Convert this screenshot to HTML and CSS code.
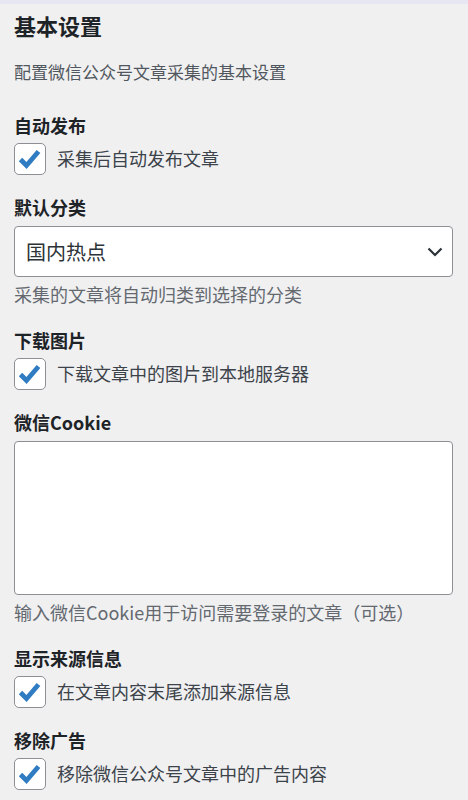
FILE: index.html
```html
<!DOCTYPE html>
<html lang="zh-CN">
<head>
<meta charset="utf-8">
<title>基本设置</title>
<link rel="stylesheet" href="styles.css">
</head>
<body>
<div class="topbar"></div>
<main class="wrap">
  <h1 class="title">基本设置</h1>
  <p class="desc">配置微信公众号文章采集的基本设置</p>

  <div class="fields">
    <div class="field">
      <div class="label">自动发布</div>
      <label class="check">
        <span class="box"><svg viewBox="0 0 32 32" width="32" height="32"><polyline points="6.5,16.5 12.5,22.5 24.5,8.5" fill="none" stroke="#2f7cc2" stroke-width="4.8" stroke-linejoin="miter"/></svg></span>
        <span class="check-text">采集后自动发布文章</span>
      </label>
    </div>

    <div class="field">
      <div class="label">默认分类</div>
      <div class="select">
        <span class="select-text">国内热点</span>
        <svg class="chev" viewBox="0 0 16 10" width="16" height="10"><polyline points="1.5,1.5 8,8 14.5,1.5" fill="none" stroke="#2c3338" stroke-width="2.2"/></svg>
      </div>
      <p class="help help-gap">采集的文章将自动归类到选择的分类</p>
    </div>

    <div class="field">
      <div class="label">下载图片</div>
      <label class="check">
        <span class="box"><svg viewBox="0 0 32 32" width="32" height="32"><polyline points="6.5,16.5 12.5,22.5 24.5,8.5" fill="none" stroke="#2f7cc2" stroke-width="4.8" stroke-linejoin="miter"/></svg></span>
        <span class="check-text">下载文章中的图片到本地服务器</span>
      </label>
    </div>

    <div class="field">
      <div class="label">微信Cookie</div>
      <div class="textarea"></div>
      <p class="help help-gap">输入微信Cookie用于访问需要登录的文章（可选）</p>
    </div>

    <div class="field">
      <div class="label">显示来源信息</div>
      <label class="check">
        <span class="box"><svg viewBox="0 0 32 32" width="32" height="32"><polyline points="6.5,16.5 12.5,22.5 24.5,8.5" fill="none" stroke="#2f7cc2" stroke-width="4.8" stroke-linejoin="miter"/></svg></span>
        <span class="check-text">在文章内容末尾添加来源信息</span>
      </label>
    </div>

    <div class="field">
      <div class="label">移除广告</div>
      <label class="check">
        <span class="box"><svg viewBox="0 0 32 32" width="32" height="32"><polyline points="6.5,16.5 12.5,22.5 24.5,8.5" fill="none" stroke="#2f7cc2" stroke-width="4.8" stroke-linejoin="miter"/></svg></span>
        <span class="check-text">移除微信公众号文章中的广告内容</span>
      </label>
    </div>
  </div>
</main>
</body>
</html>
```

FILE: styles.css
```css
* { box-sizing: border-box; }

html, body {
  margin: 0;
  padding: 0;
  background: #f0f0f1;
}

body {
  font-family: "Noto Sans CJK SC", "Noto Sans", "Liberation Sans", sans-serif;
  color: #1d2327;
  height: 800px;
  overflow: hidden;
}

.topbar {
  height: 4px;
  background: #e7e7f3;
}

.wrap {
  padding: 0 15px 0 14px;
}

.title {
  margin: 6px 0 0;
  font-size: 22px;
  line-height: 30px;
  font-weight: 700;
  color: #1d2327;
}

.desc {
  margin: 20px 0 0;
  font-size: 17px;
  line-height: 24px;
  color: #50575e;
}

.fields {
  margin-top: 29px;
  display: flex;
  flex-direction: column;
  gap: 20px;
}

.field {
  display: flex;
  flex-direction: column;
}

.label {
  font-size: 18px;
  line-height: 24px;
  font-weight: 700;
  color: #1d2327;
  margin-bottom: 6px;
}

.check {
  display: flex;
  align-items: center;
  gap: 11px;
}

.box {
  width: 32px;
  height: 32px;
  flex: none;
  border: 1.5px solid #8c8f94;
  border-radius: 5px;
  background: #fff;
  display: flex;
  align-items: center;
  justify-content: center;
  overflow: hidden;
}

.box svg {
  display: block;
  flex: none;
}

.check-text {
  font-size: 18px;
  line-height: 24px;
  color: #3c434a;
  position: relative;
  top: -1px;
}

.select {
  margin-top: 1px;
  height: 51px;
  border: 1.5px solid #8c8f94;
  border-radius: 4px;
  background: #fff;
  display: flex;
  align-items: center;
  justify-content: space-between;
  padding: 0 9px 0 11px;
}

.select-text {
  font-size: 20px;
  line-height: 26px;
  color: #2c3338;
}

.chev {
  display: block;
  flex: none;
}

.textarea {
  margin-top: 1px;
  height: 154px;
  border: 1.5px solid #8c8f94;
  border-radius: 4px;
  background: #fff;
}

.help {
  margin: 0;
  font-size: 18px;
  line-height: 24px;
  color: #646970;
}

.help-gap {
  margin-top: 5px;
  margin-bottom: 2px;
}
```
